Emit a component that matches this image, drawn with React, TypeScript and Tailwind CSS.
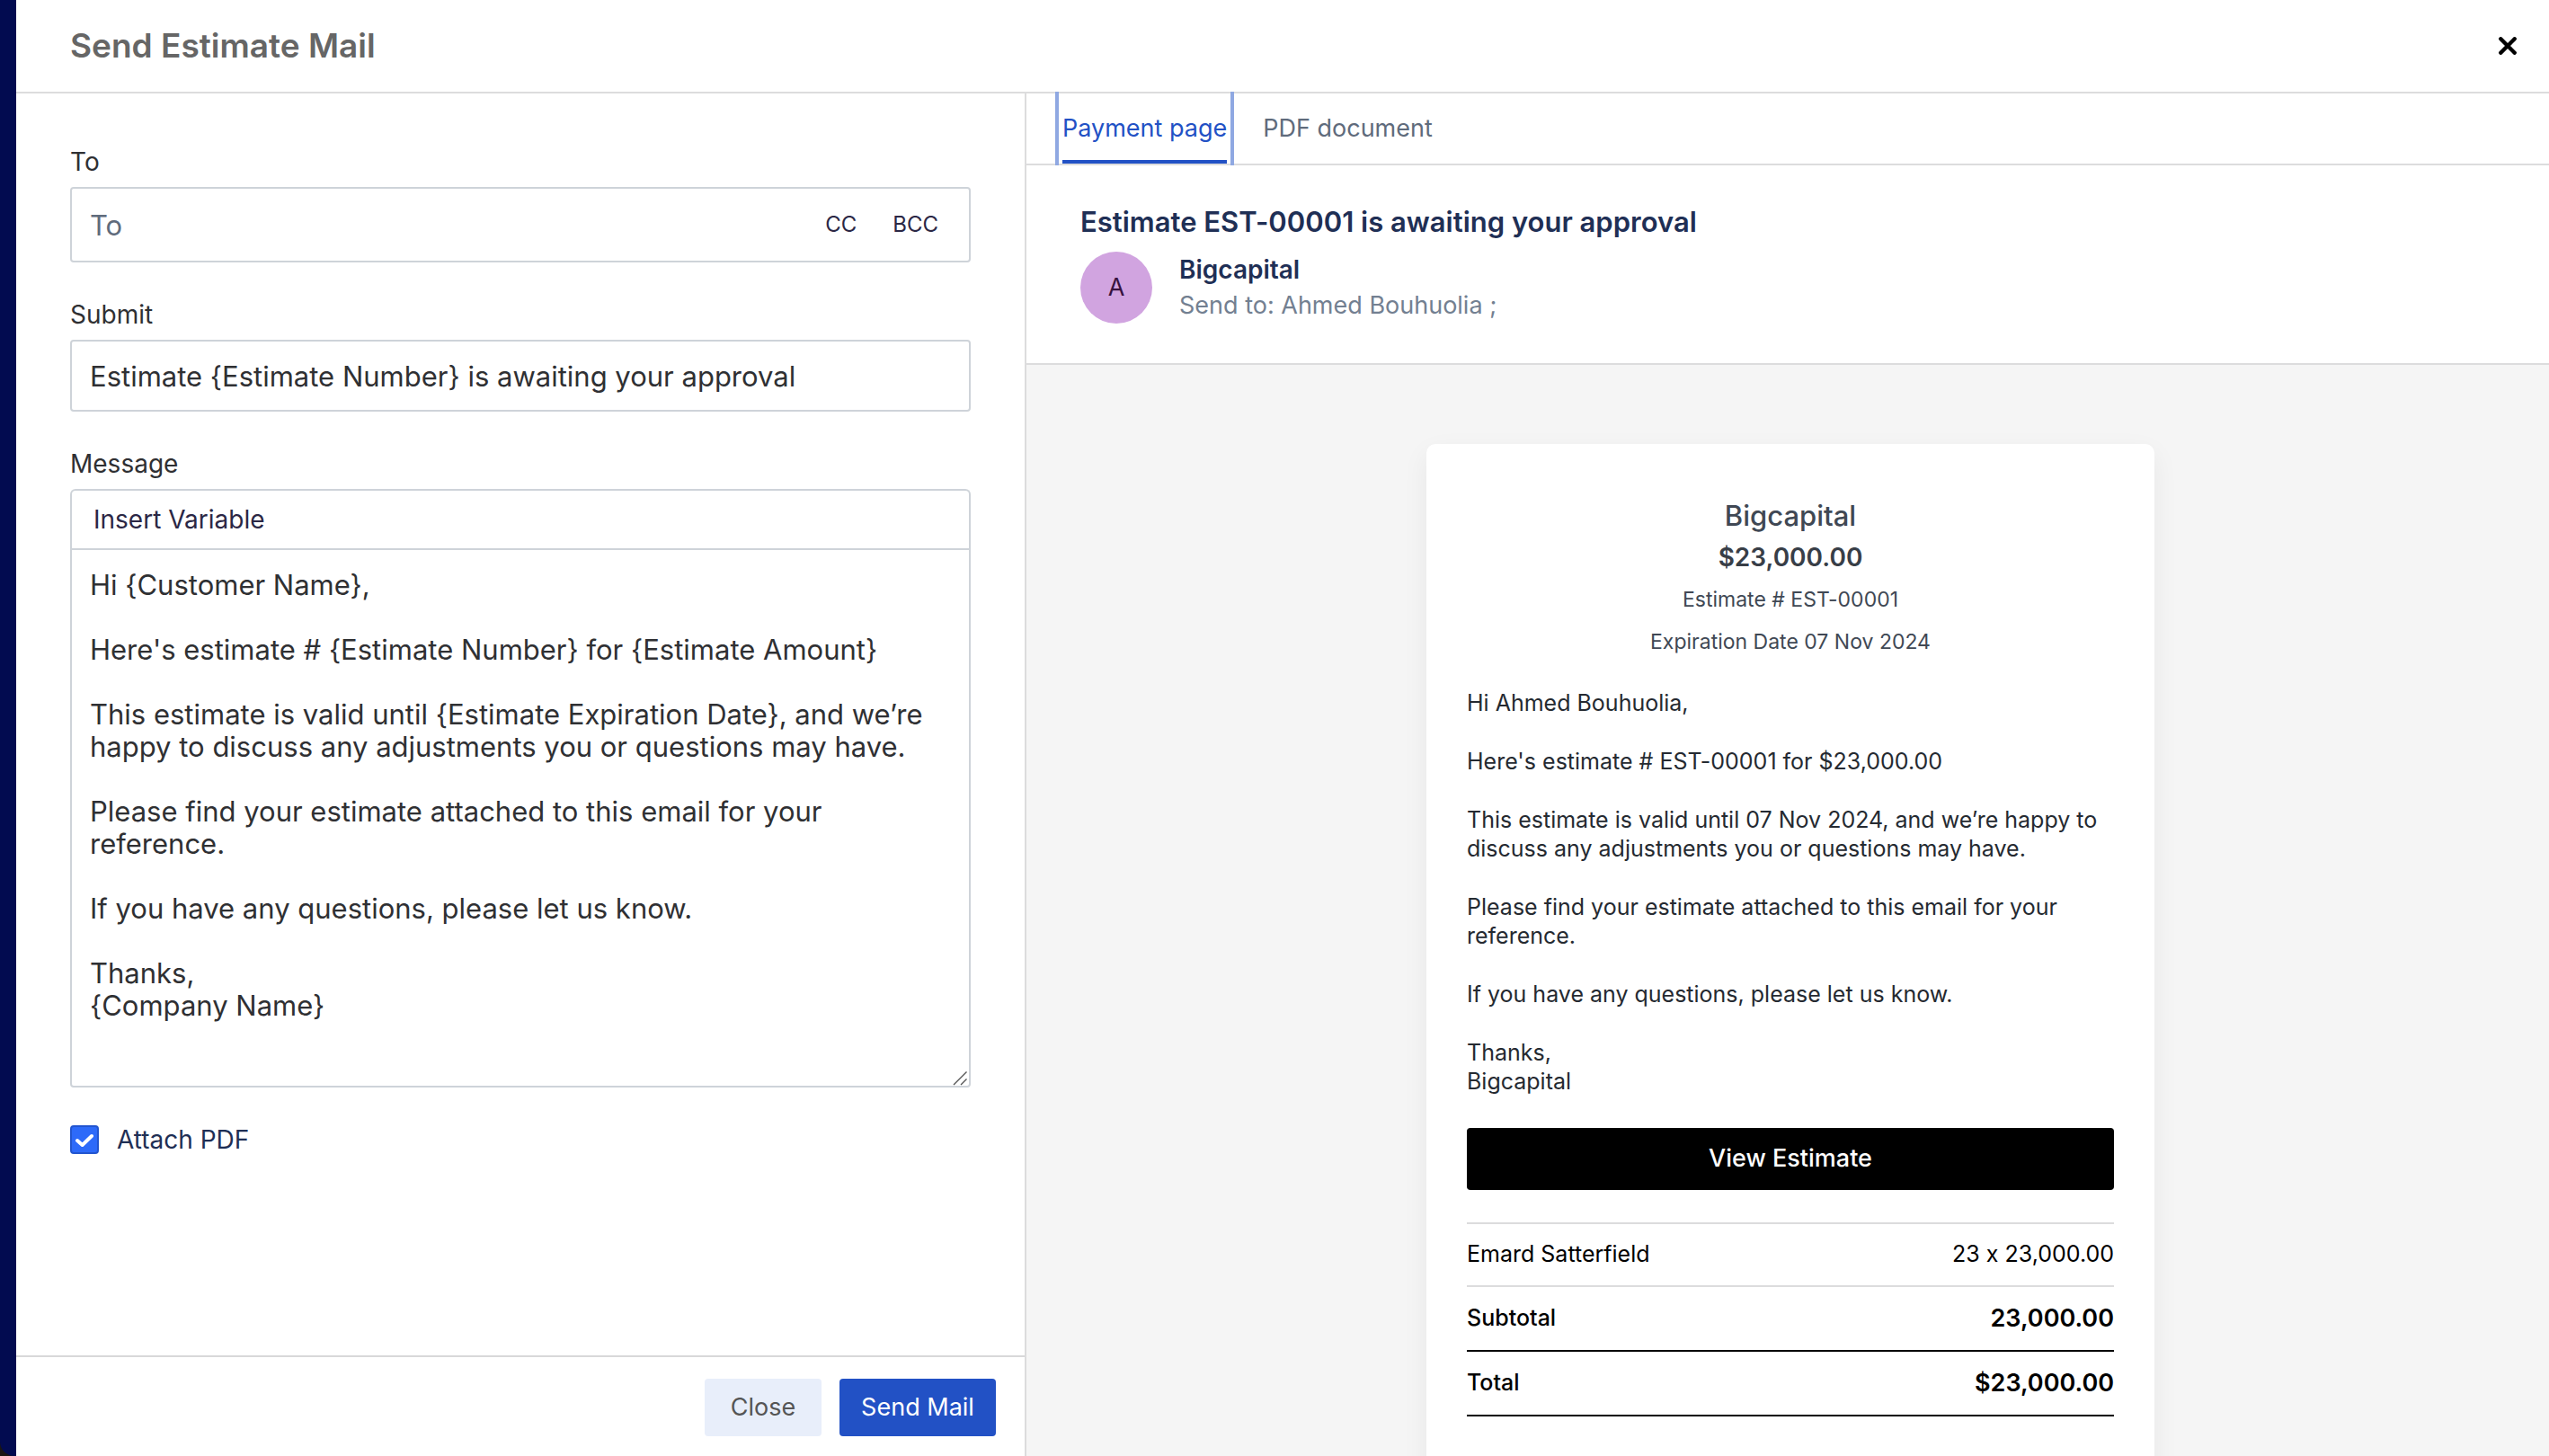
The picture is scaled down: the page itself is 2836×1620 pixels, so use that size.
import { useState } from "react";

const MESSAGE = `Hi {Customer Name},

Here's estimate # {Estimate Number} for {Estimate Amount}

This estimate is valid until {Estimate Expiration Date}, and we’re happy to discuss any adjustments you or questions may have.

Please find your estimate attached to this email for your reference.

If you have any questions, please let us know.

Thanks,
{Company Name}`;

function CloseIcon() {
  return (
    <svg viewBox="0 0 20 20" className="size-5" fill="none" stroke="currentColor" strokeWidth="4.4" strokeLinecap="round" aria-hidden="true">
      <path d="M2.3 2.3 17.7 17.7M17.7 2.3 2.3 17.7" />
    </svg>
  );
}

function ComposeForm() {
  const [to, setTo] = useState("");
  const [subject, setSubject] = useState("Estimate {Estimate Number} is awaiting your approval");
  const [message, setMessage] = useState(MESSAGE);
  const [attach, setAttach] = useState(true);

  return (
    <form className="flex w-[1124px] shrink-0 flex-col border-r-2 border-[#dcdcdd] bg-white" onSubmit={(e) => e.preventDefault()}>
      <div className="flex flex-1 flex-col px-[60px] pt-[58px] text-[#2f3033]">
        <label htmlFor="to" className="text-[28px] leading-9">To</label>
        <div className="mt-2.5 flex h-[84px] items-center rounded-sm border-2 border-[#ced3d9] pr-3.5">
          <input
            id="to"
            type="text"
            placeholder="To"
            value={to}
            onChange={(e) => setTo(e.target.value)}
            className="h-full min-w-0 flex-1 px-5 text-[31px] outline-none placeholder:text-[#5f6b7c]"
          />
          <button type="button" className="px-5 text-2xl text-[#2b2745]">CC</button>
          <button type="button" className="px-5 text-2xl text-[#2b2745]">BCC</button>
        </div>

        <label htmlFor="subject" className="mt-10 text-[28px] leading-9">Submit</label>
        <input
          id="subject"
          type="text"
          value={subject}
          onChange={(e) => setSubject(e.target.value)}
          className="mt-2.5 h-20 rounded-sm border-2 border-[#ced3d9] px-5 text-[31px] outline-none"
        />

        <label htmlFor="message" className="mt-10 text-[28px] leading-9">Message</label>
        <div className="mt-2.5 flex h-[66px] items-center rounded-t-md border-2 border-b-0 border-[#ced3d9] px-2">
          <button type="button" className="px-4 text-[28px] text-[#2b2745]">Insert Variable</button>
        </div>
        <div className="relative">
          <textarea
            id="message"
            value={message}
            onChange={(e) => setMessage(e.target.value)}
            className="block h-[600px] w-full resize-y rounded-b-sm border-2 border-[#ced3d9] px-5 py-[21px] text-[31px] leading-9 outline-none [&::-webkit-resizer]:hidden"
          />
          <svg viewBox="0 0 16 16" className="pointer-events-none absolute right-1 bottom-0.5 size-4" fill="none" stroke="#555" strokeWidth="1.4" aria-hidden="true">
            <path d="M1 15 15.5 0.5M9 15 15.5 8.5" />
          </svg>
        </div>

        <label className="mt-[42px] flex items-center gap-5 text-[28px] leading-8 text-[#1f2f55]">
          <span className="relative size-8">
            <input
              type="checkbox"
              checked={attach}
              onChange={(e) => setAttach(e.target.checked)}
              className="peer block size-8 appearance-none rounded-sm border-2 border-[#ced3d9] checked:border-[#2255cf] checked:bg-[#2d6af9]"
            />
            <svg viewBox="0 0 32 32" className="pointer-events-none absolute inset-0 hidden size-8 peer-checked:block" fill="none" stroke="white" strokeWidth="4" strokeLinecap="round" strokeLinejoin="round" aria-hidden="true">
              <path d="M8 17 13.6 22 24 12" />
            </svg>
          </span>
          Attach PDF
        </label>
      </div>

      <div className="flex justify-end gap-5 border-t-2 border-[#d8d8d9] pt-6 pr-8 pb-[22px] text-[27px]">
        <button type="button" className="h-16 min-w-[130px] rounded-sm bg-[#e8eefa] px-6 text-[#555]">Close</button>
        <button type="submit" className="h-16 min-w-[174px] rounded-sm bg-[#2251c5] px-6 text-white">Send Mail</button>
      </div>
    </form>
  );
}

function EstimateCard() {
  return (
    <article className="w-[810px] shrink-0 rounded-[10px] bg-white px-[45px] pt-14 pb-24 shadow-[0_10px_30px_rgba(0,0,0,0.06)]">
      <div className="text-center text-[#404854]">
        <h2 className="text-[31px] leading-[47px] font-medium">Bigcapital</h2>
        <p className="text-[28px] leading-[47px] font-semibold text-[#383e47]">$23,000.00</p>
        <p className="text-[23px] leading-[47px]">Estimate # EST-00001</p>
        <p className="text-[23px] leading-[47px]">Expiration Date 07 Nov 2024</p>
      </div>

      <div className="mt-7 flex flex-col gap-[33px] text-[25px] leading-8 text-[#252a31]">
        <p>Hi Ahmed Bouhuolia,</p>
        <p>Here's estimate # EST-00001 for $23,000.00</p>
        <p>This estimate is valid until 07 Nov 2024, and we’re happy to discuss any adjustments you or questions may have.</p>
        <p>Please find your estimate attached to this email for your reference.</p>
        <p>If you have any questions, please let us know.</p>
        <p>Thanks,<br />Bigcapital</p>
      </div>

      <button type="button" className="mt-9 h-[69px] w-full rounded-sm bg-black text-[27px] font-medium text-white">View Estimate</button>

      <table className="mt-9 w-full border-separate border-spacing-0 border-t-2 border-[#dcdcdd] text-[25px] text-black">
        <tbody>
          <tr>
            <td className="h-[70px] border-b-2 border-[#dcdcdd]">Emard Satterfield</td>
            <td className="h-[70px] border-b-2 border-[#dcdcdd] text-right">23 x 23,000.00</td>
          </tr>
          <tr>
            <td className="h-[72px] border-b-2 border-black font-medium">Subtotal</td>
            <td className="h-[72px] border-b-2 border-black text-right text-[27px] font-semibold">23,000.00</td>
          </tr>
          <tr>
            <td className="h-[72px] border-b-2 border-black font-medium">Total</td>
            <td className="h-[72px] border-b-2 border-black text-right text-[27px] font-semibold">$23,000.00</td>
          </tr>
        </tbody>
      </table>
    </article>
  );
}

function Preview() {
  return (
    <section className="flex min-w-0 flex-1 flex-col">
      <div role="tablist" className="flex h-20 shrink-0 border-b-2 border-[#dcdcdd] bg-white pl-8 text-[27px]">
        <button type="button" role="tab" aria-selected="true" className="relative -my-0.5 border-x-4 border-[#8fa8e2] px-1 pb-0.5 text-[#2251c5] outline-none">
          <span className="flex h-full items-center border-b-4 border-[#2251c5] pt-1.5">Payment page</span>
        </button>
        <button type="button" role="tab" aria-selected="false" className="ml-7 px-1 text-[#5f6b7c]">PDF document</button>
      </div>

      <header className="shrink-0 border-b-2 border-[#dcdcdd] bg-white px-[60px] pt-[43px] pb-11">
        <h2 className="text-[31px] leading-10 font-semibold text-[#1f2f55]">Estimate EST-00001 is awaiting your approval</h2>
        <div className="mt-[13px] flex items-center gap-[30px]">
          <span className="grid size-20 place-items-center rounded-full bg-[#d1a4e0] text-[27px] text-[#37123f]">A</span>
          <div>
            <p className="text-[28px] leading-10 font-semibold text-[#1f2f55]">Bigcapital</p>
            <p className="text-[27px] leading-10 text-[#738091]">Send to: Ahmed Bouhuolia ;</p>
          </div>
        </div>
      </header>

      <div className="flex min-h-0 flex-1 items-start justify-center overflow-hidden bg-[#f5f5f5] pt-[88px] pl-1.5">
        <EstimateCard />
      </div>
    </section>
  );
}

export default function App() {
  return (
    <div className="flex h-screen overflow-hidden bg-[#1a1614] font-['Inter',sans-serif] [font-feature-settings:'calt'_0]">
      <div className="w-[18px] shrink-0 rounded-bl-2xl bg-[#020b50]" />
      <main className="flex min-w-0 flex-1 flex-col bg-white">
        <header className="flex h-[104px] shrink-0 items-center justify-between border-b-2 border-[#dcdcdd] pr-9 pl-[60px]">
          <h1 className="text-[37px] font-semibold text-[#666]">Send Estimate Mail</h1>
          <button type="button" aria-label="Close" className="text-black"><CloseIcon /></button>
        </header>
        <div className="flex min-h-0 flex-1">
          <ComposeForm />
          <Preview />
        </div>
      </main>
    </div>
  );
}
